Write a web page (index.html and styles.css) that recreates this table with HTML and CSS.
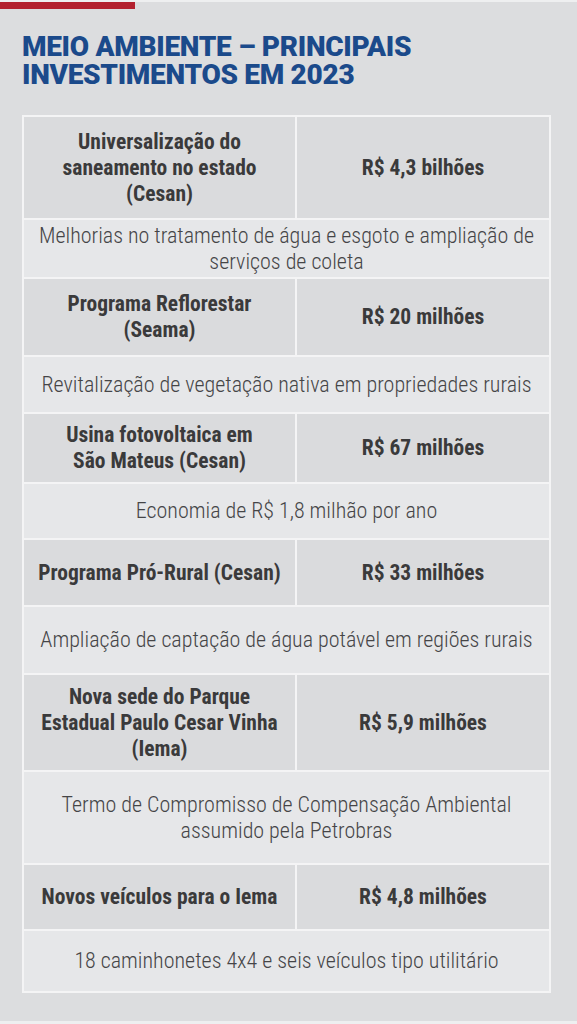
FILE: index.html
```html
<!DOCTYPE html>
<html lang="pt-BR">
<head>
    <meta charset="UTF-8">
    <meta name="viewport" content="width=device-width, initial-scale=1.0">
    <title>Meio ambiente – principais investimentos em 2023</title>
    <link rel="stylesheet" href="styles.css">
</head>
<body>
    <div class="page">
        <div class="accent"></div>
        <h1 class="title">MEIO AMBIENTE – PRINCIPAIS<br>INVESTIMENTOS EM 2023</h1>

        <div class="table">
            <div class="cell name">Universalização do<br>saneamento no estado<br>(Cesan)</div>
            <div class="cell value">R$ 4,3 bilhões</div>
            <div class="cell desc">Melhorias no tratamento de água e esgoto e ampliação de<br>serviços de coleta</div>

            <div class="cell name">Programa Reflorestar<br>(Seama)</div>
            <div class="cell value">R$ 20 milhões</div>
            <div class="cell desc">Revitalização de vegetação nativa em propriedades rurais</div>

            <div class="cell name">Usina fotovoltaica em<br>São Mateus (Cesan)</div>
            <div class="cell value">R$ 67 milhões</div>
            <div class="cell desc">Economia de R$ 1,8 milhão por ano</div>

            <div class="cell name">Programa Pró-Rural (Cesan)</div>
            <div class="cell value">R$ 33 milhões</div>
            <div class="cell desc">Ampliação de captação de água potável em regiões rurais</div>

            <div class="cell name">Nova sede do Parque<br>Estadual Paulo Cesar Vinha<br>(Iema)</div>
            <div class="cell value">R$ 5,9 milhões</div>
            <div class="cell desc">Termo de Compromisso de Compensação Ambiental<br>assumido pela Petrobras</div>

            <div class="cell name">Novos veículos para o Iema</div>
            <div class="cell value">R$ 4,8 milhões</div>
            <div class="cell desc">18 caminhonetes 4x4 e seis veículos tipo utilitário</div>
        </div>
    </div>
</body>
</html>
```

FILE: styles.css
```css
body {
    margin: 0;
    background: #eeeff0;
    font-family: "Roboto Condensed", Roboto, "Liberation Sans", sans-serif;
    font-stretch: condensed;
}

.page {
    margin-top: 2px;
    height: 1019px;
    background: #dcdddf;
    padding: 0 26px 0 22px;
    position: relative;
}

.accent {
    position: absolute;
    top: 0;
    left: 0;
    width: 135px;
    height: 7px;
    background: #b3212f;
}

.title {
    margin: 0;
    padding-top: 31px;
    font-family: Roboto, "Liberation Sans", sans-serif;
    font-stretch: normal;
    font-size: 28px;
    line-height: 28px;
    font-weight: 900;
    color: #1b4a8b;
    letter-spacing: -0.3px;
}

.table {
    margin-top: 26px;
    display: grid;
    grid-template-columns: 271px 252px;
    grid-template-rows: 101px 57px 76px 55px 68px 54px 65px 66px 95px 91px 64px 60px;
    gap: 2px;
    padding: 2px;
    background: #f4f4f5;
}

.cell {
    display: flex;
    align-items: center;
    justify-content: center;
    text-align: center;
    line-height: 26px;
}

.name,
.value {
    background: #dadbdd;
    color: #3a3a3b;
    font-size: 21.5px;
    font-weight: 700;
}

.desc {
    grid-column: span 2;
    background: #e6e7e9;
    color: #454547;
    font-size: 22px;
    font-weight: 300;
}
```
